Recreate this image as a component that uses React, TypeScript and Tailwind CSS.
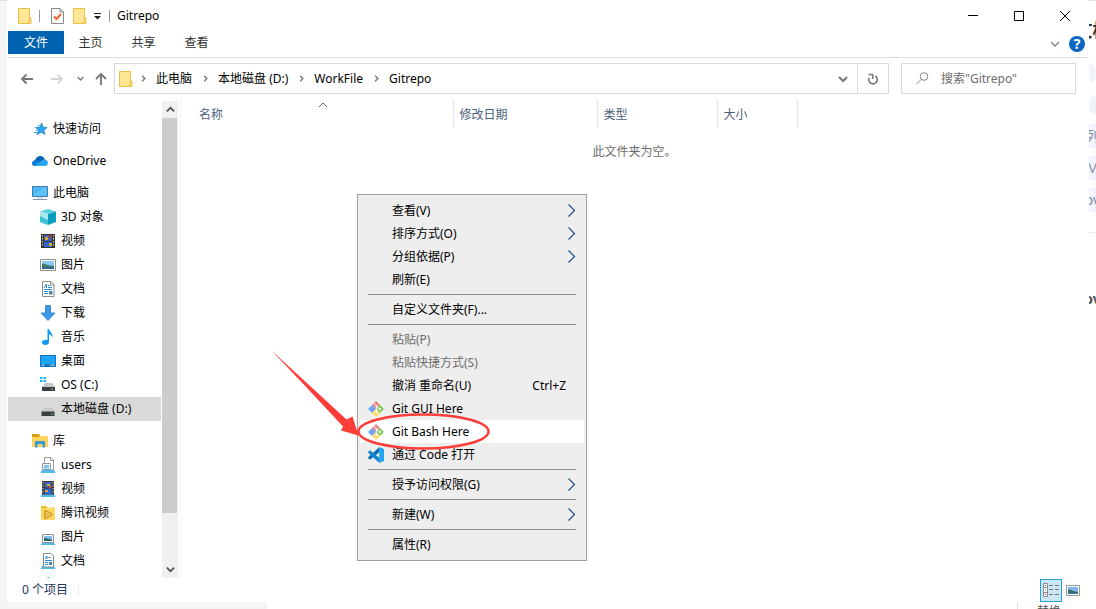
import React from 'react';

type IconType = React.FC;

interface TreeNode {
    label: string;
    icon: IconType;
    level: number;
    gap?: boolean;
    selected?: boolean;
}

interface MenuEntry {
    label?: string;
    icon?: IconType;
    shortcut?: string;
    submenu?: boolean;
    disabled?: boolean;
    active?: boolean;
}

const FolderIcon: IconType = () => (
    <svg width="14" height="16" viewBox="0 0 14 16">
        <path d="M.5.5h11v9.5h1.500v5.500H.5z" fill="#ffe793" stroke="#e9c04a" />
        <path d="M11.500 10v3.500h-1.500v2" fill="none" stroke="#e9c04a" />
    </svg>
);

const CheckDocIcon: IconType = () => (
    <svg width="13" height="16" viewBox="0 0 13 16">
        <path d="M.5.5h8.500l3.500 3.500v11.500H.5z" fill="#fafafa" stroke="#8a8a8a" />
        <path d="M9 .5V4h3.500" fill="none" stroke="#8a8a8a" />
        <path d="M3 8.500l2.500 2.500 4.500-5" fill="none" stroke="#f0642d" strokeWidth="2" />
    </svg>
);

const StarIcon: IconType = () => (
    <svg width="16" height="16" viewBox="0 0 16 16">
        <path d="M9.500 2l1.500 4.200 4 .3-3.200 2.700 1 4.300-3.700-2.400-4.100 2.600 1.400-4.500L4 6.500l4-.2z" fill="#2ba6f2" stroke="#1380cf" strokeWidth=".8" />
        <path d="M5.500 4.500h2M3 6.500h2M3.500 9h2M2 11.500h3" stroke="#41a4e4" strokeWidth="1" />
    </svg>
);

const CloudIcon: IconType = () => (
    <svg width="16" height="16" viewBox="0 0 16 16">
        <path d="M3 7.500C4 4 6.500 3 8.500 3c2 0 3.800 1.500 4.300 3.500L8 10z" fill="#0364b8" />
        <path d="M3.500 7C1.500 7 0 8.700 0 10.500S1.500 13 3 13l8-3.500C8.500 8 6 6.500 3.500 7z" fill="#0f78d4" />
        <path d="M12.500 6.500c-2 0-2.500.8-3.500 1.700L2 13h11c1.800 0 3-1.300 3-3.200s-1.700-3.300-3.500-3.300z" fill="#28a8ea" />
    </svg>
);

const ComputerIcon: IconType = () => (
    <svg width="16" height="16" viewBox="0 0 16 16">
        <path d="M.5 1.500h15v10H.5z" fill="#4db6f7" stroke="#3b7eae" />
        <path d="M1 11L12 2h3v9z" fill="#76ccff" opacity=".5" />
        <path d="M5 12.500h6v1H5z" fill="#b6c3cc" />
        <path d="M1 14h14v1H1z" fill="#8b99a5" />
    </svg>
);

const CubeIcon: IconType = () => (
    <svg width="16" height="16" viewBox="0 0 16 16">
        <path d="M8 0l8 2.500L8 5 0 2.500z" fill="#5ccfdf" />
        <path d="M0 2.500L8 5v11L0 13z" fill="#a6e8ef" />
        <path d="M16 2.500L8 5v11L16 13z" fill="#0a9cbf" />
        <path d="M0 13V7l8 4v5z" fill="#3cc0d6" />
    </svg>
);

const FilmIcon: IconType = () => (
    <svg width="16" height="16" viewBox="0 0 16 16">
        <path d="M1 1h14v14H1z" fill="#333" />
        <path d="M4 2h8v6H4z" fill="#3f63b5" />
        <path d="M4 9h8v5H4z" fill="#2f68d2" />
        <path d="M5 4h3v3H5zM9 10h3v3H9z" fill="#d9a72a" />
        <path d="M9 2h3v3H9z" fill="#9c4435" />
        <path d="M2.500 2v12M13.500 2v12" stroke="#d8d8d8" strokeDasharray="1.500 1.500" />
    </svg>
);

const PictureIcon: IconType = () => (
    <svg width="16" height="16" viewBox="0 0 16 16">
        <path d="M.5 2.500h15v11H.5z" fill="#fff" stroke="#8f8f8f" />
        <path d="M2 4h12v8H2z" fill="#8cc6f5" />
        <path d="M2 7c3-1 5 2 12 2v3H2z" fill="#3f7d6d" />
        <path d="M2 10.500h12V12H2z" fill="#2c5f96" />
    </svg>
);

const DocIcon: IconType = () => (
    <svg width="16" height="16" viewBox="0 0 16 16">
        <path d="M2.500.5h8.500l3 3v12H2.500z" fill="#fff" stroke="#8b8b8b" />
        <path d="M10.500.5V4H14" fill="none" stroke="#8b8b8b" />
        <path d="M4 7l2.500-4v4M8 4.500h2M8 6.500h4M4 8.500h8M4 10.500h4M4 12.500h4" fill="none" stroke="#2b8bd0" />
        <path d="M9 10h3.500v3.500H9z" fill="#4a86b5" />
    </svg>
);

const DownloadIcon: IconType = () => (
    <svg width="16" height="16" viewBox="0 0 16 16">
        <path d="M5.500.5h5V8h4.500l-7 7.500L1 8h4.500z" fill="#3a9ae8" stroke="#2a7fcb" strokeWidth=".8" />
    </svg>
);

const MusicIcon: IconType = () => (
    <svg width="16" height="16" viewBox="0 0 16 16">
        <path d="M7.500 0H9c.3 3 4.500 4 3.500 9-.5-2.500-2-3.500-3.500-3.500V13c0 2-1.700 3-3.700 3S2 14.700 2 13.300C2 11.500 5 10 7.500 11z" fill="#109bf0" />
    </svg>
);

const DesktopIcon: IconType = () => (
    <svg width="16" height="16" viewBox="0 0 16 16">
        <path d="M.5 2.500h15v11H.5z" fill="#1ea3fc" stroke="#1174be" />
        <path d="M1 11.500h14V13H1z" fill="#0d6db8" />
        <path d="M2 12.200h2M10 12.200h1M12 12.200h2" stroke="#fff" />
    </svg>
);

const DriveIcon: IconType = () => (
    <svg width="16" height="16" viewBox="0 0 16 16">
        <path d="M4 7h8.500l2 4h-13z" fill="#c8c8c8" />
        <path d="M1.500 10.500h13V15h-13z" fill="#3c4043" />
        <path d="M11 12.500h2v1h-2z" fill="#4be04b" />
    </svg>
);

const SystemDriveIcon: IconType = () => (
    <svg width="16" height="16" viewBox="0 0 16 16">
        <path d="M5 6h7.500l2.500 4H2z" fill="#c4c9cc" />
        <path d="M2 10h13v4H2z" fill="#3c4043" />
        <path d="M11 11.500h2v1h-2z" fill="#4be04b" />
        <path d="M0 0h2.500v2H0zM3.500 0H6v2H3.500zM0 3h2.500v2H0zM3.500 3H6v2H3.500z" fill="#17b7ea" />
    </svg>
);

const LibraryIcon: IconType = () => (
    <svg width="16" height="16" viewBox="0 0 16 16">
        <path d="M0 1h7l1 2h8v11H0z" fill="#ffd45a" />
        <path d="M0 1h7l1 2-1 1H0z" fill="#dc9c12" />
        <path d="M3 14.500V8h10v6.500h-2.500V11h-5v3.500z" fill="#3c98dd" />
    </svg>
);

// blue stand below every library child
const Stand = () => <path d="M2 13h12l1.500 3H.5z" fill="#52b8ee" />;

const UsersIcon: IconType = () => (
    <svg width="16" height="16" viewBox="0 0 16 16">
        <path d="M4.500.5H11l2.500 2.500v10h-9z" fill="#fff" stroke="#9a9a9a" />
        <path d="M10.500.5v3h3" fill="none" stroke="#9a9a9a" />
        <Stand />
        <path d="M2.500 6.500h8v6h-8z" fill="#fff" stroke="#8a99a5" />
        <path d="M4 8h5v3.500H4z" fill="#7cc2f5" />
    </svg>
);

const LibFilmIcon: IconType = () => (
    <svg width="16" height="16" viewBox="0 0 16 16">
        <Stand />
        <path d="M2 0h12v13.500H2z" fill="#333" />
        <path d="M4.500 1h7v5.500h-7z" fill="#3e67b9" />
        <path d="M4.500 7.500h7V13h-7z" fill="#2f68d2" />
        <path d="M7 3h3v2H7zM5 9h3v2H5z" fill="#dca92f" />
        <path d="M9 5h2.500v2H9z" fill="#c64c37" />
        <path d="M3 1v12M13 1v12" stroke="#d8d8d8" strokeDasharray="1.500 1.500" />
    </svg>
);

const TencentIcon: IconType = () => (
    <svg width="16" height="16" viewBox="0 0 16 16">
        <path d="M1 1h5l1.500 1.500H15V15H1z" fill="#ffd75e" />
        <path d="M1 1h5l1 2H1z" fill="#eeb62b" />
        <path d="M4 6.500c0-1.500 1-2 2.500-1.200l5.500 3c1.200.8 1.200 1.600 0 2.400l-5.500 3C5 14.500 4 14 4 12.500z" fill="#d7a42d" />
        <path d="M6.500 7.500l4 2-4 2.200z" fill="none" stroke="#ffe48a" strokeWidth=".8" />
    </svg>
);

const LibPictureIcon: IconType = () => (
    <svg width="16" height="16" viewBox="0 0 16 16">
        <path d="M2 14h12l1.500 2H.5z" fill="#52b8ee" />
        <path d="M2.500 5.500h11v8h-11z" fill="#fff" stroke="#8f8f8f" />
        <path d="M4 7h8v5H4z" fill="#7dbcf0" />
        <path d="M4 9c3 0 4 1.500 8 1.500V12H4z" fill="#2e655b" />
    </svg>
);

const LibDocIcon: IconType = () => (
    <svg width="16" height="16" viewBox="0 0 16 16">
        <Stand />
        <path d="M3.500.5H11l2.500 2.500v11h-10z" fill="#fff" stroke="#8b8b8b" />
        <path d="M5 6l2-3v3M8.500 4.500h2M5 7.500h7M5 9.500h3M5 11.500h3" fill="none" stroke="#2b8bd0" />
        <path d="M9 9h3v3H9z" fill="#4a86b5" />
    </svg>
);

const GitIcon: IconType = () => (
    <svg width="16" height="16" viewBox="0 0 16 16">
        <path d="M8 0l4 4-4 4-4-4z" fill="#f08080" />
        <path d="M4 4l4 4-4 4-4-4z" fill="#6ea5fb" />
        <path d="M12 4l4 4-4 4-4-4z" fill="#7fcb58" />
        <path d="M8 8l4 4-4 4-4-4z" fill="#ffdc66" />
        <path d="M5.500 1.500l3 3.500v6M8.500 5l3 3" fill="none" stroke="#fff" strokeWidth=".9" />
        <circle cx="8.500" cy="5" r="1" fill="#fff" />
        <circle cx="8.500" cy="11" r="1.200" fill="#fff" />
        <circle cx="11.800" cy="8" r="1.200" fill="#fff" />
    </svg>
);

const CodeIcon: IconType = () => (
    <svg width="16" height="16" viewBox="0 0 16 16">
        <path d="M11.500 0v5L2 12.800.3 11.500V10z" fill="#0b70b8" />
        <path d="M11.500 16v-5L2 3.200.3 4.500V6z" fill="#1487cf" />
        <path d="M11.200 0L16 2v12l-4.800 2z" fill="#24a5f0" />
    </svg>
);

const Chevron = ({ d, size, color, width = 1 }: { d: string; size: number; color: string; width?: number }) => (
    <svg width={size} height={size} viewBox="0 0 10 10" className="shrink-0">
        <path d={d} fill="none" stroke={color} strokeWidth={width} />
    </svg>
);

const DOWN = 'M1 3l4 4 4-4';
const UP = 'M1 7l4-4 4 4';
const RIGHT = 'M3 1l4 4-4 4';

const tree: TreeNode[] = [
    { label: '快速访问', icon: StarIcon, level: 0 },
    { label: 'OneDrive', icon: CloudIcon, level: 0, gap: true },
    { label: '此电脑', icon: ComputerIcon, level: 0, gap: true },
    { label: '3D 对象', icon: CubeIcon, level: 1 },
    { label: '视频', icon: FilmIcon, level: 1 },
    { label: '图片', icon: PictureIcon, level: 1 },
    { label: '文档', icon: DocIcon, level: 1 },
    { label: '下载', icon: DownloadIcon, level: 1 },
    { label: '音乐', icon: MusicIcon, level: 1 },
    { label: '桌面', icon: DesktopIcon, level: 1 },
    { label: 'OS (C:)', icon: SystemDriveIcon, level: 1 },
    { label: '本地磁盘 (D:)', icon: DriveIcon, level: 1, selected: true },
    { label: '库', icon: LibraryIcon, level: 0, gap: true },
    { label: 'users', icon: UsersIcon, level: 1 },
    { label: '视频', icon: LibFilmIcon, level: 1 },
    { label: '腾讯视频', icon: TencentIcon, level: 1 },
    { label: '图片', icon: LibPictureIcon, level: 1 },
    { label: '文档', icon: LibDocIcon, level: 1 },
];

// an entry without a label is a separator
const menu: MenuEntry[] = [
    { label: '查看(V)', submenu: true },
    { label: '排序方式(O)', submenu: true },
    { label: '分组依据(P)', submenu: true },
    { label: '刷新(E)' },
    {},
    { label: '自定义文件夹(F)...' },
    {},
    { label: '粘贴(P)', disabled: true },
    { label: '粘贴快捷方式(S)', disabled: true },
    { label: '撤消 重命名(U)', shortcut: 'Ctrl+Z' },
    { label: 'Git GUI Here', icon: GitIcon },
    { label: 'Git Bash Here', icon: GitIcon, active: true },
    { label: '通过 Code 打开', icon: CodeIcon },
    {},
    { label: '授予访问权限(G)', submenu: true },
    {},
    { label: '新建(W)', submenu: true },
    {},
    { label: '属性(R)' },
];

const crumbs = ['此电脑', '本地磁盘 (D:)', 'WorkFile', 'Gitrepo'];

const TitleBar = () => (
    <header className="flex h-[31px] items-center pl-[10px]">
        <FolderIcon />
        <div className="ml-[7px] h-3 w-px bg-[#999]" />
        <div className="ml-[11px]"><CheckDocIcon /></div>
        <div className="ml-[9px]"><FolderIcon /></div>
        <button aria-label="自定义快速访问工具栏" className="ml-[6px]">
            <svg width="9" height="8" viewBox="0 0 9 8">
                <path d="M1 1.500h7" stroke="#222" />
                <path d="M1 4h7L4.500 7.500z" fill="#222" />
            </svg>
        </button>
        <div className="ml-[7px] h-3 w-px bg-[#999]" />
        <h1 className="ml-[7px] flex-1">Gitrepo</h1>
        <button aria-label="最小化" className="flex h-full w-[46px] items-center justify-center">
            <svg width="10" height="10"><path d="M0 4.500h10" stroke="#000" /></svg>
        </button>
        <button aria-label="最大化" className="flex h-full w-[46px] items-center justify-center">
            <svg width="10" height="10"><path d="M.5.500h9v9h-9z" fill="none" stroke="#000" /></svg>
        </button>
        <button aria-label="关闭" className="flex h-full w-[46px] items-center justify-center">
            <svg width="10" height="10"><path d="M0 0l10 10M10 0L0 10" stroke="#000" /></svg>
        </button>
    </header>
);

const Ribbon = () => (
    <nav className="flex h-[27px] items-start border-b border-[#dadbdc] pr-[3px] text-[#333]">
        <button className="h-[23px] w-14 bg-[#0063b1] text-white">文件</button>
        <button className="h-6 w-[53px]">主页</button>
        <button className="h-6 w-[53px]">共享</button>
        <button className="h-6 w-[53px]">查看</button>
        <div className="flex-1" />
        <button aria-label="展开功能区" className="flex h-[26px] w-5 items-center justify-center">
            <Chevron d={DOWN} size={10} color="#888" width={1.5} />
        </button>
        <button aria-label="帮助" className="ml-1 flex h-[26px] items-center">
            <span className="flex size-4 items-center justify-center rounded-full bg-[#0a66c0] text-sm font-bold text-white">?</span>
        </button>
    </nav>
);

const AddressBar = () => (
    <div className="flex h-[41px] items-center px-3">
        <button aria-label="返回">
            <svg width="14" height="14" viewBox="0 0 14 14"><path d="M13 7H2M6.500 2.500L2 7l4.500 4.500" fill="none" stroke="#777" strokeWidth="1.800" /></svg>
        </button>
        <button aria-label="前进" className="ml-4">
            <svg width="14" height="14" viewBox="0 0 14 14"><path d="M1 7h11M7.500 2.500L12 7l-4.500 4.500" fill="none" stroke="#d5d5d5" strokeWidth="1.800" /></svg>
        </button>
        <button aria-label="最近浏览的位置" className="ml-[13px]"><Chevron d={DOWN} size={7} color="#777" width={2} /></button>
        <button aria-label="向上" className="ml-[10px]">
            <svg width="14" height="14" viewBox="0 0 14 14"><path d="M7 13V2M2 7l5-5 5 5" fill="none" stroke="#777" strokeWidth="1.800" /></svg>
        </button>
        <div className="ml-[6px] flex h-[31px] flex-1 items-center border border-[#d9d9d9] pl-1">
            <FolderIcon />
            {crumbs.map((crumb) => (
                <React.Fragment key={crumb}>
                    <span className="ml-[6px] flex w-2 justify-center"><Chevron d={RIGHT} size={7} color="#777" width={2} /></span>
                    <button className="mr-[3px] ml-[9px]">{crumb}</button>
                </React.Fragment>
            ))}
            <div className="flex-1" />
            <button aria-label="以前的位置" className="flex w-7 items-center justify-center">
                <Chevron d={DOWN} size={10} color="#777" width={2} />
            </button>
            <button aria-label="刷新" className="flex h-full w-[31px] items-center justify-center border-l border-[#d9d9d9]">
                <svg width="12" height="12" viewBox="0 0 12 12">
                    <path d="M8.200 3A4.200 4.200 0 1 1 2.200 4.800" fill="none" stroke="#777" strokeWidth="1.700" />
                    <path d="M1.500 1.500h4.200v4.500" fill="none" stroke="#777" strokeWidth="1.600" />
                </svg>
            </button>
        </div>
        <label className="ml-3 flex h-[31px] w-[175px] items-center border border-[#d9d9d9] pl-[14px]">
            <svg width="13" height="13" viewBox="0 0 13 13" className="shrink-0">
                <circle cx="8" cy="4.500" r="3.800" fill="none" stroke="#888" />
                <path d="M5.300 7.300L.5 12.200" stroke="#888" />
            </svg>
            <input aria-label="搜索" placeholder={'搜索"Gitrepo"'} className="ml-3 w-full min-w-0 outline-none placeholder:text-[#6d6d6d]" />
        </label>
    </div>
);

const NavPane = () => (
    <aside className="flex w-[173px] shrink-0 border-r border-[#f3f3f3] pt-[2px]">
        <ul className="min-w-0 flex-1 overflow-hidden pt-4">
            {tree.map(({ label, icon: Icon, level, gap, selected }, i) => (
                <li key={i} className={gap ? 'mt-2' : ''}>
                    <button className={`flex h-6 w-full items-center gap-[5px] ${level ? 'pl-8' : 'pl-6'} ${selected ? 'bg-[#d9d9d9]' : ''}`}>
                        <Icon />
                        {label}
                    </button>
                </li>
            ))}
            <li className="flex h-6 items-center pl-8"><MusicIcon /></li>
        </ul>
        <div className="mr-[2px] ml-px flex w-4 flex-col items-center bg-[#f0f0f0]">
            <span className="flex h-[17px] items-center"><Chevron d={UP} size={9} color="#505050" width={2} /></span>
            <div className="h-[395px] w-[15px] self-start bg-[#cdcdcd]" />
            <div className="flex-1" />
            <span className="flex h-[17px] items-center"><Chevron d={DOWN} size={9} color="#505050" width={2} /></span>
        </div>
    </aside>
);

const FileTable = () => (
    <main className="min-w-0 flex-1 pt-px pl-3">
        <table className="w-full table-fixed border-collapse">
            <thead>
                <tr className="h-7 text-left text-[#4c607a]">
                    <th className="relative w-[260px] border-r border-[#e5e5e5] pt-[2px] pl-[6px] font-normal">
                        名称
                        <span className="absolute top-0 left-[125px]"><Chevron d={UP} size={10} color="#666" /></span>
                    </th>
                    <th className="w-36 border-r border-[#e5e5e5] pt-[2px] pl-[6px] font-normal">修改日期</th>
                    <th className="w-[120px] border-r border-[#e5e5e5] pt-[2px] pl-[6px] font-normal">类型</th>
                    <th className="w-20 border-r border-[#e5e5e5] pt-[2px] pl-[6px] font-normal">大小</th>
                    <th />
                </tr>
            </thead>
            <tbody>
                <tr className="h-12">
                    <td colSpan={5} className="pr-3 text-center text-[#6d6d6d]">此文件夹为空。</td>
                </tr>
            </tbody>
        </table>
    </main>
);

const StatusBar = () => (
    <footer className="flex h-6 items-center pr-[7px] pl-[14px] text-[#1e395b]">
        <span>0 个项目</span>
        <div className="ml-[10px] h-3 w-px bg-[#eee]" />
        <div className="flex-1" />
        <button aria-label="详细信息" className="flex h-[23px] w-[22px] items-center justify-center border border-[#26a0da] bg-[#cce8f6]">
            <svg width="16" height="14" viewBox="0 0 16 14">
                <path d="M.5.500h4v13h-4zM.5 4.500h4M.5 9.500h4" fill="#fff" stroke="#8b8b8b" />
                <path d="M6 2.500h4M12 2.500h4M6 6.500h4M12 6.500h4M6 11.500h4M12 11.500h4" stroke="#777" />
                <path d="M2 2.500h1" stroke="#444" />
                <path d="M2 7h1" stroke="#2b8bd0" />
                <path d="M2 11.500h1" stroke="#d22" />
            </svg>
        </button>
        <button aria-label="大图标" className="ml-[3px] flex w-4 justify-center">
            <svg width="14" height="11" viewBox="0 0 14 11">
                <path d="M.5.500h13v10H.5z" fill="#fff" stroke="#999" />
                <path d="M2 2h10v7H2z" fill="#7eb4ef" />
                <path d="M2 5c4-1 5 2 10 2v2H2z" fill="#33705c" />
                <path d="M2 8h10v1H2z" fill="#3c78b4" />
            </svg>
        </button>
    </footer>
);

const ContextMenu = () => (
    <div role="menu" className="absolute top-[194px] left-[357px] w-[230px] border border-[#a0a0a0] bg-[#eee] px-[2px] py-1">
        {menu.map(({ label, icon: Icon, shortcut, submenu, disabled, active }, i) =>
            label ? (
                <button
                    key={i}
                    role="menuitem"
                    disabled={disabled}
                    className={`flex h-[23px] w-full items-center px-2 ${active ? 'bg-white' : ''} ${disabled ? 'text-[#6d6d6d]' : ''}`}
                >
                    <span className="w-6">{Icon && <Icon />}</span>
                    <span className="flex-1 text-left">{label}</span>
                    {shortcut && <span className="mr-[10px]">{shortcut}</span>}
                    {submenu && (
                        <svg width="9" height="14" viewBox="0 0 9 14">
                            <path d="M1.500.5l6 6-6 6" fill="none" stroke="#1c4f8c" strokeWidth="1.200" />
                        </svg>
                    )}
                </button>
            ) : (
                <div key={i} role="separator" className="mx-2 my-[3px] h-px bg-[#919191]" />
            )
        )}
    </div>
);

// red arrow and ring drawn over the menu
const Annotation = () => (
    <svg className="pointer-events-none absolute top-[345px] left-[265px]" width="230" height="110" viewBox="265 345 230 110">
        <path d="M271.500 350.500L346.500 419.500l6-3 6 19-17.500-5 2-4L308 389z" fill="#fc3d39" />
        <ellipse cx="423.500" cy="431.500" rx="65" ry="17" fill="none" stroke="#fc3d39" strokeWidth="2.500" />
    </svg>
);

// sliver of the web page that stays visible beside the window
const PageEdge = () => (
    <div className="flex w-[7px] shrink-0 flex-col overflow-hidden whitespace-nowrap text-sm text-[#8088a8]">
        <div className="h-px bg-[#ddd]" />
        <div className="mt-[17px] flex h-6 items-center justify-center text-lg font-bold text-[#333]">文档</div>
        <div className="mt-[21px] h-5 rounded-r-full bg-[#f1f4fa]" />
        <div className="mt-3 h-5 rounded-l-full bg-[#f1f4fa]" />
        <div className="mt-[9px] flex h-6 items-center justify-center bg-[#f1f4fa]">列</div>
        <div className="mt-2 flex h-6 items-center justify-center bg-[#f1f4fa]">M</div>
        <div className="mt-2 flex h-6 items-center justify-center bg-[#f1f4fa]">ov</div>
        <div className="mt-5 h-px bg-[#e8e8e8]" />
        <div className="mt-[54px] flex h-6 items-center justify-center font-bold text-[#555]">ov</div>
    </div>
);

export default function App() {
    return (
        <div className="relative flex h-screen overflow-hidden bg-white font-['Noto_Sans','Noto_Sans_CJK_SC',sans-serif] text-[12px] leading-4 text-black">
            <div className="w-[7px] shrink-0 border-t border-[#ddd] bg-[#f5f5f5]" />
            <div className="flex min-w-0 flex-1 flex-col">
                <div className="flex min-h-0 flex-1 flex-col pr-px pl-px">
                    <TitleBar />
                    <Ribbon />
                    <AddressBar />
                    <div className="flex min-h-0 flex-1">
                        <NavPane />
                        <FileTable />
                    </div>
                    <StatusBar />
                </div>
                <div className="flex h-[7px] overflow-hidden">
                    <div className="w-[260px] bg-[#f5f5f5]" />
                    <div className="flex-1" />
                    <div className="w-px bg-[#ddd]" />
                    <div className="w-[71px] pt-[2px] pl-[19px] text-[#555]">替换</div>
                </div>
            </div>
            <PageEdge />
            <ContextMenu />
            <Annotation />
        </div>
    );
}
